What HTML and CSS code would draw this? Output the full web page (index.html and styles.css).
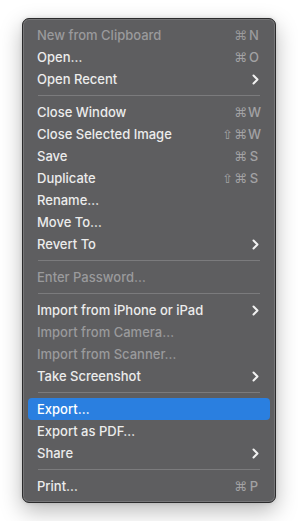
FILE: index.html
```html
<!DOCTYPE html>
<html lang="en">
<head>
    <meta charset="UTF-8">
    <meta name="viewport" content="width=device-width, initial-scale=1.0">
    <title>File Menu</title>
    <link rel="stylesheet" href="styles.css">
</head>
<body>
    <div class="menu">
        <div class="item disabled"><span class="label">New from Clipboard</span><span class="keys"><span class="mod">⌘</span><span class="key">N</span></span></div>
        <div class="item"><span class="label">Open…</span><span class="keys"><span class="mod">⌘</span><span class="key">O</span></span></div>
        <div class="item"><span class="label">Open Recent</span><svg class="chev" viewBox="0 0 7 11"><polyline points="1.5,1.5 5.5,5.5 1.5,9.5"/></svg></div>
        <div class="sep"></div>
        <div class="item"><span class="label">Close Window</span><span class="keys"><span class="mod">⌘</span><span class="key">W</span></span></div>
        <div class="item"><span class="label">Close Selected Image</span><span class="keys"><span class="mod">⇧⌘</span><span class="key">W</span></span></div>
        <div class="item"><span class="label">Save</span><span class="keys"><span class="mod">⌘</span><span class="key">S</span></span></div>
        <div class="item"><span class="label">Duplicate</span><span class="keys"><span class="mod">⇧⌘</span><span class="key">S</span></span></div>
        <div class="item"><span class="label">Rename…</span></div>
        <div class="item"><span class="label">Move To…</span></div>
        <div class="item"><span class="label">Revert To</span><svg class="chev" viewBox="0 0 7 11"><polyline points="1.5,1.5 5.5,5.5 1.5,9.5"/></svg></div>
        <div class="sep"></div>
        <div class="item disabled"><span class="label">Enter Password…</span></div>
        <div class="sep"></div>
        <div class="item"><span class="label">Import from iPhone or iPad</span><svg class="chev" viewBox="0 0 7 11"><polyline points="1.5,1.5 5.5,5.5 1.5,9.5"/></svg></div>
        <div class="item disabled"><span class="label">Import from Camera…</span></div>
        <div class="item disabled"><span class="label">Import from Scanner…</span></div>
        <div class="item"><span class="label">Take Screenshot</span><svg class="chev" viewBox="0 0 7 11"><polyline points="1.5,1.5 5.5,5.5 1.5,9.5"/></svg></div>
        <div class="sep"></div>
        <div class="item active"><span class="label">Export…</span></div>
        <div class="item"><span class="label">Export as PDF…</span></div>
        <div class="item"><span class="label">Share</span><svg class="chev" viewBox="0 0 7 11"><polyline points="1.5,1.5 5.5,5.5 1.5,9.5"/></svg></div>
        <div class="sep"></div>
        <div class="item"><span class="label">Print…</span><span class="keys"><span class="mod">⌘</span><span class="key">P</span></span></div>
    </div>
</body>
</html>
```

FILE: styles.css
```css
body {
    margin: 0;
    padding: 18px 22px;
    background-color: #ffffff;
    font-family: Inter, "Noto Sans", "DejaVu Sans", sans-serif;
}

.menu {
    width: 252px;
    padding: 5px 0;
    background-color: #5e5e60;
    border: 1px solid #2b2b2c;
    border-radius: 7px;
    box-shadow: inset 0 0 0 1px #767678, 0 8px 22px rgba(0, 0, 0, 0.28), 0 0 4px rgba(0, 0, 0, 0.12);
}

.item {
    display: flex;
    align-items: center;
    height: 22px;
    margin: 0 5px;
    padding: 0 10px 0 9px;
    border-radius: 4px;
    font-size: 13px;
    font-weight: 500;
    color: #ececec;
}

.item .label {
    flex: 1;
    white-space: nowrap;
}

.item.disabled {
    color: #9a9a9c;
}

.item.active {
    background-color: #2a7fe0;
    color: #ffffff;
}

.keys {
    display: flex;
    align-items: center;
    color: #a2a2a4;
    font-family: "DejaVu Sans", sans-serif;
    font-size: 13px;
}

.disabled .keys {
    color: #9a9a9c;
}

.keys .mod {
    letter-spacing: 1px;
}

.keys .key {
    width: 12px;
    text-align: center;
    font-family: Inter, sans-serif;
    font-size: 13px;
}

.chev {
    width: 7px;
    height: 11px;
    margin-right: 1px;
}

.chev polyline {
    fill: none;
    stroke: #f2f2f2;
    stroke-width: 2;
    stroke-linecap: round;
    stroke-linejoin: round;
}

.sep {
    height: 1px;
    margin: 5px 15px 5px 15px;
    background-color: #7b7b7d;
}
```
